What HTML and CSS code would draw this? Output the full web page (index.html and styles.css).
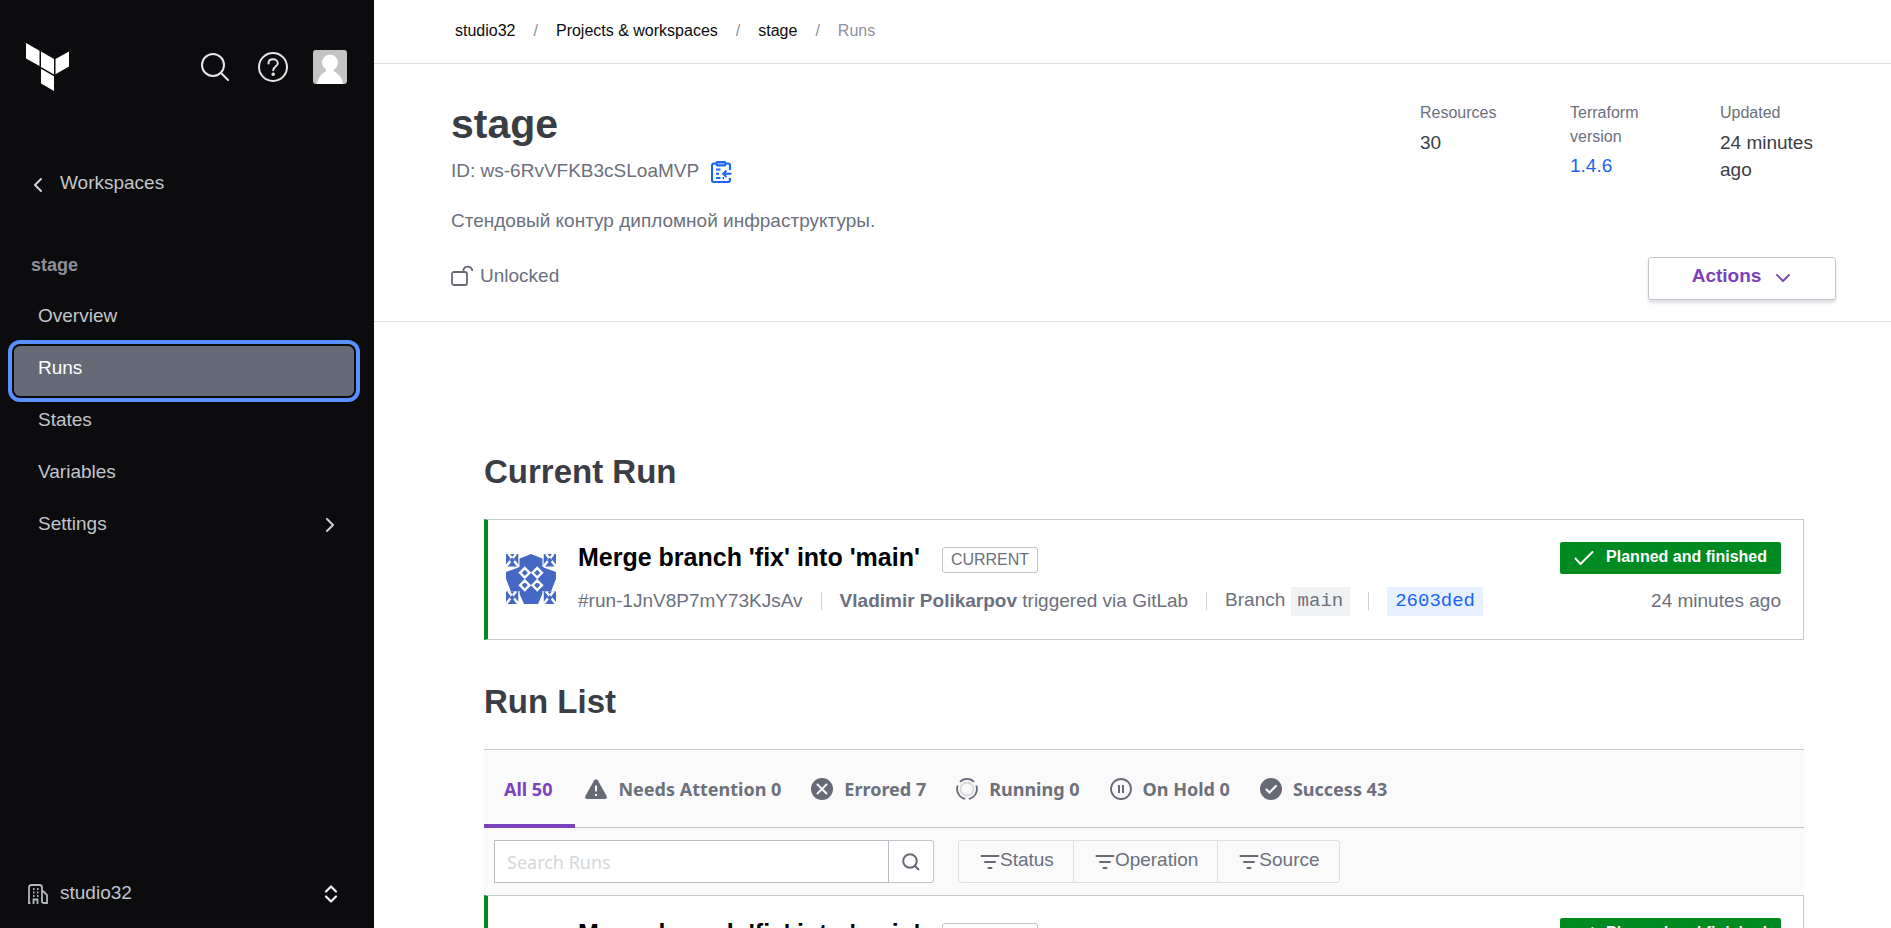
FILE: index.html
```html
<!DOCTYPE html>
<html lang="en">
<head>
<meta charset="utf-8">
<title>Runs | stage | studio32</title>
<link rel="stylesheet" href="styles.css">
</head>
<body>
<div class="app">
  <aside class="sidebar">
    <div class="side-top">
      <a class="logo" href="#" aria-label="Home">
        <svg width="43" height="48" viewBox="0 0 43 48" fill="#fff"><path d="M0 0l13.500 7.800v15.200L0 15.500zM15 8.500l13 7.500v15.500L15 24zM29.500 16L43 8.500V23.500L29.500 31.300zM15 25.800l13 7.400V48l-13-7.400z"/></svg>
      </a>
      <div class="side-tools">
        <button class="icon-btn" aria-label="Search"><svg width="32" height="30" viewBox="0 0 32 30" fill="none" stroke="#e6e6e8" stroke-width="2" stroke-linecap="round"><circle cx="12" cy="13" r="11"/><path d="M20 21l7 7"/></svg></button>
        <button class="icon-btn" aria-label="Help"><svg width="30" height="30" viewBox="0 0 30 30" fill="none" stroke="#e6e6e8" stroke-width="2" stroke-linecap="round"><circle cx="15" cy="15" r="14"/><path d="M10.500 11.500c0-2.600 2-4.200 4.600-4.200s4.700 1.600 4.700 4c0 3.200-4.600 3.300-4.600 7"/><circle cx="15.200" cy="22.200" r=".8" fill="#e6e6e8"/></svg></button>
        <button class="icon-btn" aria-label="Account"><svg width="34" height="34" viewBox="0 0 34 34"><rect width="34" height="34" rx="3" fill="#c4c4c4"/><path d="M4 34c1-7 5-10.500 9-12.500v-2a8 8 0 1 1 8 0v2c4 2 8 5.500 9 12.500z" fill="#fff"/></svg></button>
      </div>
    </div>
    <a class="back" href="#"><svg width="10" height="16" viewBox="0 0 10 16" fill="none" stroke="#d0d1d6" stroke-width="2" stroke-linecap="round" stroke-linejoin="round"><path d="M8 3L2 9l6 6"/></svg><span>Workspaces</span></a>
    <nav class="side-nav" aria-label="Workspace">
      <h2 class="side-title">stage</h2>
      <a class="nav-item" href="#"><span>Overview</span></a>
      <a class="nav-item active" href="#" aria-current="page"><span>Runs</span></a>
      <a class="nav-item" href="#"><span>States</span></a>
      <a class="nav-item" href="#"><span>Variables</span></a>
      <a class="nav-item" href="#"><span>Settings</span><svg width="10" height="16" viewBox="0 0 10 16" fill="none" stroke="#d0d1d6" stroke-width="2" stroke-linecap="round" stroke-linejoin="round"><path d="M2 2l6 6-6 6"/></svg></a>
    </nav>
    <button class="org">
      <svg width="20" height="20" viewBox="0 0 20 20" fill="none" stroke="#b2b6bd" stroke-width="1.800"><path d="M1 20V3.500Q1 1 3.500 1h8Q14 1 14 3.500V19M14 7.500h1.500L19 11v8h-4.500M5.500 20v-4.500h4V20M0 19.200h2.500"/><path d="M5 5h1.500M9 5h1.500M5 8.500h1.500M9 8.500h1.500M5 12h1.500M9 12h1.500" stroke-width="2"/></svg>
      <span class="org-name">studio32</span>
      <svg width="14" height="18" viewBox="0 0 14 18" fill="none" stroke="#efeff1" stroke-width="2.200" stroke-linecap="round" stroke-linejoin="round"><path d="M2 6.500l5-5 5 5M2 11.500l5 5 5-5"/></svg>
    </button>
  </aside>

  <main class="main">
    <nav class="crumbs" aria-label="Breadcrumb">
      <a href="#">studio32</a><span class="slash">/</span><a href="#">Projects &amp; workspaces</a><span class="slash">/</span><a href="#">stage</a><span class="slash">/</span><span class="here">Runs</span>
    </nav>

    <header class="head">
      <div class="head-info">
        <h1>stage</h1>
        <p class="ws-id"><span>ID: ws-6RvVFKB3cSLoaMVP</span>
          <button class="icon-btn" aria-label="Copy ID"><svg width="21" height="24" viewBox="0 0 21 24" fill="none" stroke="#1c64f5" stroke-width="2.200"><g transform="translate(0 2)"><path d="M5 2.500H3Q1 2.500 1 4.500V19q0 2 2 2h14q2 0 2-2v-2M15 2.500h2q2 0 2 2V9"/><rect x="5.500" y="1" width="9" height="3.500" rx="1.200" fill="#8fb3fb"/><path d="M5 8.500h4.500M5 12.800h3M5 17h4.500M11.500 17H13M20.500 12.800h-8M15.500 9.500l-3.300 3.300 3.300 3.300" stroke-width="2"/></g></svg></button>
        </p>
        <p class="desc">Стендовый контур дипломной инфраструктуры.</p>
        <p class="lock"><svg width="22" height="22" viewBox="0 0 22 22" fill="none" stroke="#656a76" stroke-width="1.800"><rect x="1" y="7" width="15" height="13" rx="2"/><path d="M12.500 7V4.800a4.400 4 0 0 1 8.600 0V6"/></svg><span>Unlocked</span></p>
      </div>
      <div class="head-side">
        <dl class="stats">
          <div><dt>Resources</dt><dd>30</dd></div>
          <div><dt>Terraform version</dt><dd class="tight"><a href="#">1.4.6</a></dd></div>
          <div><dt>Updated</dt><dd>24 minutes ago</dd></div>
        </dl>
        <button class="actions"><span>Actions</span><svg width="14" height="10" viewBox="0 0 14 10" fill="none" stroke="#7b42bc" stroke-width="1.800" stroke-linecap="round" stroke-linejoin="round"><path d="M1 2l6 6 6-6"/></svg></button>
      </div>
    </header>

    <div class="content">
      <h2 class="section">Current Run</h2>
      <article class="run">
        <svg class="ident" width="50" height="50" viewBox="0 0 50 50"><use href="#identicon"/></svg>
        <div class="run-body">
          <div class="run-row"><a class="run-title" href="#">Merge branch 'fix' into 'main'</a><span class="tag">CURRENT</span><span class="status"><svg width="20" height="16" viewBox="0 0 20 16" fill="none" stroke="#fff" stroke-width="2" stroke-linecap="round" stroke-linejoin="round"><path d="M1.500 8.500l5 5.500L18.500 2"/></svg><span>Planned and finished</span></span></div>
          <div class="run-meta"><span>#run-1JnV8P7mY73KJsAv</span><i class="bar"></i><span><b>Vladimir Polikarpov</b> triggered via GitLab</span><i class="bar"></i><span class="branch">Branch <code>main</code></span><i class="bar"></i><a class="sha" href="#">2603ded</a><time>24 minutes ago</time></div>
        </div>
      </article>

      <h2 class="section list-title">Run List</h2>
      <div class="tabs">
        <button class="tab on">All 50</button>
        <button class="tab"><svg width="22" height="20" viewBox="0 0 22 20"><path d="M9.200 1.200q1.800-2 3.600 0L21.600 17q.8 2.500-1.600 3H2Q-.4 19.500.4 17z" fill="#656a76"/><path d="M11 6.500v6M11 15v2" stroke="#fafafa" stroke-width="2"/></svg>Needs Attention 0</button>
        <button class="tab"><svg width="22" height="22" viewBox="0 0 22 22"><circle cx="11" cy="11" r="11" fill="#656a76"/><path d="M6.500 6.500l9 9M15.500 6.500l-9 9" stroke="#fafafa" stroke-width="2" stroke-linecap="round"/></svg>Errored 7</button>
        <button class="tab"><svg width="22" height="22" viewBox="0 0 22 22" fill="none"><circle cx="11" cy="11" r="6.500" stroke="#d9dadd" stroke-width="2"/><path d="M4 3.800a10 10 0 0 1 14 0M20.300 7.500a10 10 0 0 1-7.500 13.300M9.200 20.800A10 10 0 0 1 1.700 7.500" stroke="#656a76" stroke-width="1.800"/></svg>Running 0</button>
        <button class="tab"><svg width="22" height="22" viewBox="0 0 22 22" fill="none" stroke="#656a76"><circle cx="11" cy="11" r="10" stroke-width="1.800"/><path d="M9 7v8M13 7v8" stroke-width="2"/></svg>On Hold 0</button>
        <button class="tab"><svg width="22" height="22" viewBox="0 0 22 22"><circle cx="11" cy="11" r="11" fill="#656a76"/><path d="M6.500 11.500l3 3 6.500-6.500" stroke="#fafafa" stroke-width="2.200" fill="none" stroke-linecap="round"/></svg>Success 43</button>
      </div>
      <div class="toolbar">
        <form class="search">
          <input type="text" placeholder="Search Runs" aria-label="Search Runs">
          <button type="button" aria-label="Search"><svg width="18" height="18" viewBox="0 0 18 18" fill="none" stroke="#656a76" stroke-width="2"><circle cx="8" cy="8" r="6.800"/><path d="M13 13l4 4"/></svg></button>
        </form>
        <div class="filters">
          <button><svg width="20" height="16" viewBox="0 0 20 16"><use href="#filter"/></svg><span>Status</span></button>
          <button><svg width="20" height="16" viewBox="0 0 20 16"><use href="#filter"/></svg><span>Operation</span></button>
          <button><svg width="20" height="16" viewBox="0 0 20 16"><use href="#filter"/></svg><span>Source</span></button>
        </div>
      </div>
      <article class="run">
        <svg class="ident" width="50" height="50" viewBox="0 0 50 50"><use href="#identicon"/></svg>
        <div class="run-body">
          <div class="run-row"><a class="run-title" href="#">Merge branch 'fix' into 'main'</a><span class="tag">CURRENT</span><span class="status"><svg width="20" height="16" viewBox="0 0 20 16" fill="none" stroke="#fff" stroke-width="2" stroke-linecap="round" stroke-linejoin="round"><path d="M1.500 8.500l5 5.500L18.500 2"/></svg><span>Planned and finished</span></span></div>
        </div>
      </article>
    </div>
  </main>
</div>
<svg class="defs" width="0" height="0" aria-hidden="true">
  <defs>
    <g id="filter" stroke="#656a76" stroke-width="2" stroke-linecap="round"><path d="M1.500 2h17M5 8h10M8.500 14h3"/></g>
    <g id="corner"><path d="M0 0h12.500v12.500H0z" fill="#4668c5"/><path d="M2.500 0l10 12.500M10 0L0 12.500" stroke="#fff" stroke-width="2.400"/><path d="M3.500 6.200L6.200 3.500 9 6.200 6.200 9z" fill="#4668c5"/></g>
    <g id="identicon">
      <path d="M25 0l12.500 5v8.500L50 18v7l-5 12.500h-7.500L32 50H18l-5.500-12.500H5L0 25v-7l12.500-4.500V5z" fill="#4668c5"/>
      <use href="#corner"/><use href="#corner" x="37.500"/><use href="#corner" y="37.500"/><use href="#corner" x="37.500" y="37.500"/>
      <path d="M13 0v13M37 0v13M13 37v13M37 37v13" stroke="#fff" stroke-width="1"/>
      <g fill="none" stroke="#fff" stroke-width="2.400"><path d="M18.800 14l4.700 4.800-4.700 4.700-4.700-4.700zM31.200 14l4.700 4.800-4.700 4.700-4.700-4.700zM18.800 26.500l4.700 4.700-4.700 4.800-4.700-4.800zM31.200 26.500l4.700 4.700-4.700 4.800-4.700-4.800z"/></g>
    </g>
  </defs>
</svg>
</body>
</html>
```

FILE: styles.css
```css
* { box-sizing: border-box; }
body { margin: 0; font-family: "Liberation Sans", Arial, sans-serif; font-size: 19px; line-height: 24px; color: #6b707c; background: #fff; }
h1, h2, p, dl, dd { margin: 0; }
a { color: inherit; text-decoration: none; }
button { font: inherit; color: inherit; background: none; border: 0; padding: 0; }
svg { display: block; flex: none; }
.defs { position: absolute; }
.app { display: flex; height: 100vh; }

.sidebar { flex: none; width: 374px; padding: 43px 20px 16px 14px; display: flex; flex-direction: column; background: #0c0c0e; color: #c2c5cb; }
.side-top { display: flex; justify-content: space-between; align-items: center; padding: 0 7px 0 12px; height: 48px; }
.side-tools { display: flex; align-items: center; gap: 25px; }
.back { display: flex; align-items: center; gap: 17px; padding-left: 19px; margin-top: 80px; }
.back span, .nav-item span, .org-name { padding-bottom: 2px; }
.side-nav { margin-top: 56px; display: flex; flex-direction: column; gap: 2px; }
.side-title { font-size: 18px; line-height: 24px; padding-left: 17px; margin-bottom: 15px; color: #8c909c; }
.nav-item { display: flex; align-items: center; justify-content: space-between; height: 50px; padding: 0 19px 4px 24px; border-radius: 6px; }
.nav-item.active { background: #656a76; color: #fff; box-shadow: 0 0 0 2px #0c0c0e, 0 0 0 6px #5990ff; }
.org { margin-top: auto; display: flex; align-items: center; gap: 12px; height: 36px; padding: 0 16px 0 14px; }
.org-name { flex: 1; text-align: left; }

.main { flex: 1; min-width: 0; overflow-y: auto; scrollbar-width: none; }
.crumbs { display: flex; align-items: center; gap: 18px; height: 64px; padding: 0 80px 2px 81px; border-bottom: 1px solid #dedfe3; font-size: 16px; color: #0c0c0e; }
.slash, .here { color: #8c909c; }

.head { display: flex; justify-content: space-between; padding: 36px 55px 21px 77px; border-bottom: 1px solid #dedfe3; }
.head-info { padding-bottom: 12px; }
h1 { font-size: 41px; line-height: 48px; color: #3b3d45; }
.ws-id { display: flex; align-items: center; gap: 12px; margin-top: 11px; }
.desc { margin-top: 26px; }
.lock { display: flex; align-items: center; gap: 7px; margin-top: 31px; }
.head-side { display: flex; flex-direction: column; align-items: flex-end; justify-content: space-between; padding-top: 1px; }
.stats { display: grid; grid-template-columns: repeat(3, 116px); gap: 34px; }
dt { font-size: 16px; line-height: 24px; }
dd { line-height: 27px; margin-top: 4px; color: #3b3d45; }
dd.tight { margin-top: 3px; }
dd a { color: #1c64f5; }
.actions { display: flex; align-items: center; justify-content: center; gap: 15px; width: 188px; height: 43px; padding: 0 2px 2px 0; border: 1px solid #c2c5cb; border-radius: 3px; background: #fff; box-shadow: 0 3px 3px #656a7633; font-weight: bold; color: #7b42bc; }
.actions span, .filters span { padding-bottom: 4px; }

.content { padding: 130px 87px 0 110px; }
.section { font-size: 33px; line-height: 40px; color: #3b3d45; margin-bottom: 27px; }
.list-title { margin-top: 42px; }
.run { display: flex; gap: 22px; height: 121px; padding: 22px 22px 0 18px; border: 1px solid #c9cad1; border-left: 4px solid #008a22; background: #fff; }
.ident { margin-top: 12px; }
.run-body { flex: 1; min-width: 0; }
.run-row { display: flex; align-items: center; height: 32px; }
.run-title { font-size: 25px; font-weight: bold; color: #000; padding-bottom: 3px; }
.tag { margin: 4px 0 0 22px; padding: 0 8px; border: 1px solid #c2c5cb; border-radius: 3px; font-size: 16px; }
.status { margin-left: auto; display: flex; align-items: center; gap: 12px; height: 32px; padding: 0 14px; border-radius: 2px; background: #008a22; color: #fff; font-size: 16px; font-weight: bold; }
.status span { padding-bottom: 3px; }
.run-meta { display: flex; align-items: center; height: 30px; margin-top: 12px; }
.bar { width: 1px; height: 18px; margin: 0 18px; background: #d0d1d6; }
code, .sha { font-family: "Liberation Mono", monospace; font-size: 19px; line-height: 29px; display: inline-block; padding: 0 7px; background: #f1f2f3; }
.sha { padding: 0 8px; background: #e6f0ff; color: #1c64f5; }
time { margin-left: auto; }

.tabs { display: flex; height: 79px; border-top: 1px solid #c9cad1; border-bottom: 1px solid #c2c5cb; background: #fafafa; }
.tab { display: flex; align-items: center; gap: 11px; margin-bottom: -1px; padding: 0 20px 0 10px; font-family: "Noto Sans", sans-serif; font-size: 18px; font-weight: bold; }
.tab.on { padding: 4px 23px 0 20px; color: #7b42bc; border-bottom: 4px solid #7b42bc; }
.toolbar { display: flex; gap: 24px; padding: 12px 10px; background: #fafafa; }
.search { display: flex; width: 440px; height: 43px; }
.search input { flex: 1; min-width: 0; padding: 0 12px; border: 1px solid #b8bbc4; border-radius: 0; background: #fff; font: 18px "Noto Sans", sans-serif; }
.search input::placeholder { color: #d5d7db; opacity: 1; }
.search button { display: grid; place-items: center; width: 45px; border: 1px solid #c2c5cb; border-left: 0; border-radius: 0 3px 3px 0; background: #fff; }
.filters { display: flex; height: 43px; border: 1px solid #dedfe3; border-radius: 3px; }
.filters button { display: flex; align-items: center; padding: 0 19px 0 21px; }
.filters button + button { border-left: 1px solid #dedfe3; }
```
